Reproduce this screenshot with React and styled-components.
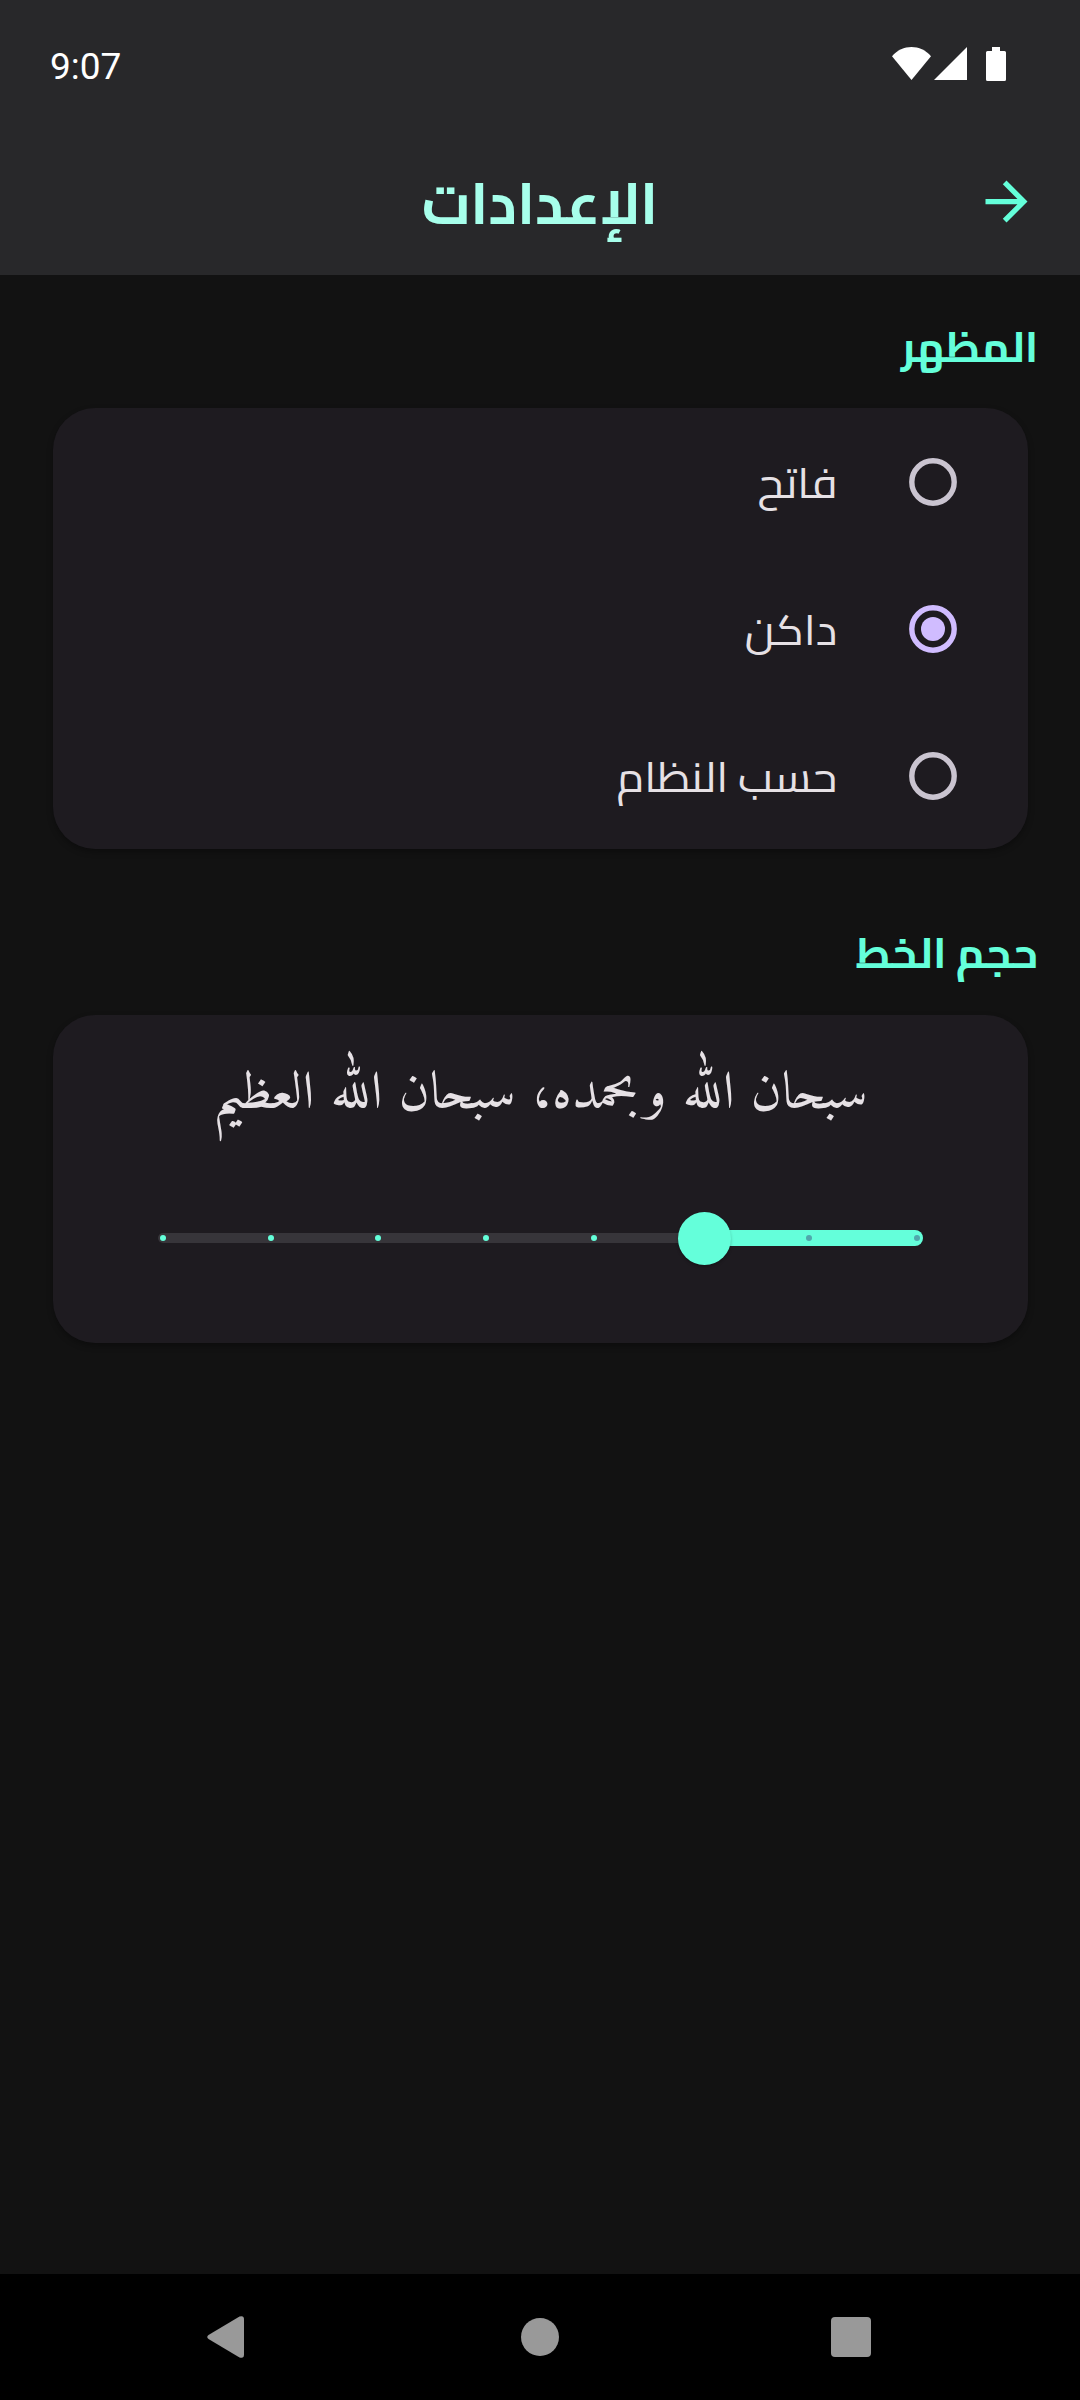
import React from "react";
import styled, { createGlobalStyle } from "styled-components";

const Global = createGlobalStyle`
  * { box-sizing: border-box; }
  body { margin: 0; background: #121212; }
`;

const Screen = styled.div`
  width: 1080px;
  height: 2400px;
  display: flex;
  flex-direction: column;
  background: #121212;
  font-family: "Cairo", "DejaVu Sans", sans-serif;
  overflow: hidden;
`;

const Header = styled.header`
  height: 275px;
  background: #28282a;
  flex: none;
`;

const StatusBar = styled.div`
  height: 128px;
  padding: 0 74px 0 50px;
  display: flex;
  align-items: center;
  justify-content: space-between;
`;

const Clock = styled.span`
  font: 400 37px/44px Roboto, sans-serif;
  color: #fff;
  padding-top: 6px;
`;

const StatusIcons = styled.svg`
  display: block;
  width: 114px;
  height: 34px;
`;

const AppBar = styled.div`
  direction: rtl;
  height: 147px;
  display: grid;
  grid-template-columns: 147px 1fr 147px;
  align-items: center;
`;

const BackButton = styled.button`
  border: 0;
  padding: 0;
  background: none;
  width: 63px;
  height: 63px;
  margin: 0 42px 0 0;
  svg { display: block; }
`;

const Title = styled.h1`
  margin: 0;
  padding-top: 2px;
  text-align: center;
  font-size: 57.75px;
  line-height: 64px;
  font-weight: 700;
  color: #a7ffeb;
`;

const Content = styled.main`
  direction: rtl;
  flex: 1;
  display: flex;
  flex-direction: column;
`;

/* Arabic ignores letter-spacing, so tracking is applied as a slight stretch. */
const Tracked = styled.span`
  display: inline-block;
  white-space: nowrap;
  transform: scaleX(${(p) => p.$stretch});
  transform-origin: ${(p) => p.$origin || "right"} center;
`;

const SectionTitle = styled.h2`
  margin: 0;
  height: ${(p) => p.$height}px;
  padding: ${(p) => p.$top}px 42px 0 0;
  font-size: 42px;
  line-height: 50px;
  font-weight: 700;
  color: #64ffda;
`;

const Card = styled.section`
  height: ${(p) => p.$height}px;
  margin: 0 52.5px;
  border-radius: 42px;
  background: #1e1b20;
  box-shadow: 0 3px 6px rgba(0, 0, 0, 0.3);
`;

const Option = styled.div`
  height: 147px;
  padding-right: 70.5px;
  display: flex;
  align-items: center;
`;

const Radio = styled.svg`
  display: block;
  width: 48px;
  height: 48px;
  color: ${(p) => (p.$on ? "#d0bcff" : "#cac4d0")};
`;

const OptionLabel = styled.span`
  margin-right: 71.5px;
  padding-top: 2px;
  font-size: 42px;
  line-height: 50px;
  color: #e6e1e5;
`;

const Preview = styled.p`
  margin: 0;
  height: 150px;
  padding-top: 45px;
  text-align: center;
  font-family: "Amiri", "Noto Naskh Arabic", "DejaVu Sans", serif;
  font-size: 52.5px;
  line-height: 70px;
  color: #e6e1e5;
`;

const Slider = styled.div`
  width: 765px;
  height: 146px;
  margin: 0 auto;
  display: grid;
  align-items: center;
  > * { grid-area: 1 / 1; }
`;

const Track = styled.div`
  height: 10px;
  border-radius: 5px;
  background: #37353a;
`;

const ActiveTrack = styled.div`
  width: 219px;
  height: 16px;
  border-radius: 0 8px 8px 0;
  background: #64ffda;
`;

const Ticks = styled.div`
  display: flex;
  justify-content: space-between;
  padding: 0 2.5px;
`;

const Tick = styled.i`
  width: 6px;
  height: 6px;
  border-radius: 50%;
  background: ${(p) => (p.$active ? "#50a8ac" : "#64ffda")};
`;

const Thumb = styled.div`
  width: 53px;
  height: 53px;
  margin-right: 191.5px;
  border-radius: 50%;
  background: #64ffda;
  box-shadow: 0 2px 3px rgba(0, 0, 0, 0.25);
`;

const NavBar = styled.nav`
  height: 126px;
  flex: none;
  background: #000;
  display: flex;
  align-items: center;
  justify-content: space-between;
  padding: 0 209px 0 207px;
  svg { display: block; fill: #999; }
`;

const options = ["فاتح", "داكن", "حسب النظام"];
const selected = 1;
const ticks = [1, 1, 1, 0, 0, 0, 0, 0];

export default function App() {
  return (
    <Screen>
      <Global />
      <Header>
        <StatusBar>
          <Clock>9:07</Clock>
          <StatusIcons viewBox="0 0 114 34" fill="#fff">
            <path d="M0 9.200C10.500-3 28.500-3 39 9.200L19.500 33Z" />
            <path d="M42 33H75V0Z" />
            <path d="M100 0h8v4h4.500q1.500 0 1.500 1.500v27q0 1.500-1.500 1.500h-17q-1.500 0-1.500-1.500v-27q0-1.500 1.500-1.500h4.500z" />
          </StatusIcons>
        </StatusBar>
        <AppBar>
          <BackButton aria-label="رجوع">
            <svg width="63" height="63" viewBox="0 0 24 24" fill="#64ffda">
              <path d="M12 4l-1.410 1.410L16.170 11H4v2h12.170l-5.580 5.590L12 20l8-8z" />
            </svg>
          </BackButton>
          <Title>الإعدادات</Title>
        </AppBar>
      </Header>
      <Content>
        <SectionTitle $height={133} $top={47}><Tracked $stretch={1.03}>المظهر</Tracked></SectionTitle>
        <Card $height={441}>
          {options.map((label, i) => (
            <Option key={label}>
              <Radio $on={i === selected} viewBox="0 0 48 48">
                <circle cx="24" cy="24" r="21.2" fill="none" stroke="currentColor" strokeWidth="5.4" />
                {i === selected && <circle cx="24" cy="24" r="12" fill="currentColor" />}
              </Radio>
              <OptionLabel><Tracked $stretch={1.06}>{label}</Tracked></OptionLabel>
            </Option>
          ))}
        </Card>
        <SectionTitle $height={166} $top={79}><Tracked $stretch={1.03}>حجم الخط</Tracked></SectionTitle>
        <Card $height={328}>
          <Preview><Tracked $stretch={1.04} $origin="center">سبحان الله وبحمده، سبحان الله العظيم</Tracked></Preview>
          <Slider>
            <Track />
            <ActiveTrack />
            <Ticks>{ticks.map((t, i) => <Tick key={i} $active={t} />)}</Ticks>
            <Thumb />
          </Slider>
        </Card>
      </Content>
      <NavBar>
        <svg width="37" height="42" viewBox="0 0 37 42">
          <path d="M1.500 19L32.500.6Q37-1 37 3.500V38.500Q37 43 32.500 41.400L1.500 23Q-1 21 1.500 19Z" />
        </svg>
        <svg width="42" height="38" viewBox="0 0 42 38"><circle cx="23" cy="19" r="19" /></svg>
        <svg width="40" height="40" viewBox="0 0 40 40"><rect width="40" height="40" rx="4" /></svg>
      </NavBar>
    </Screen>
  );
}
